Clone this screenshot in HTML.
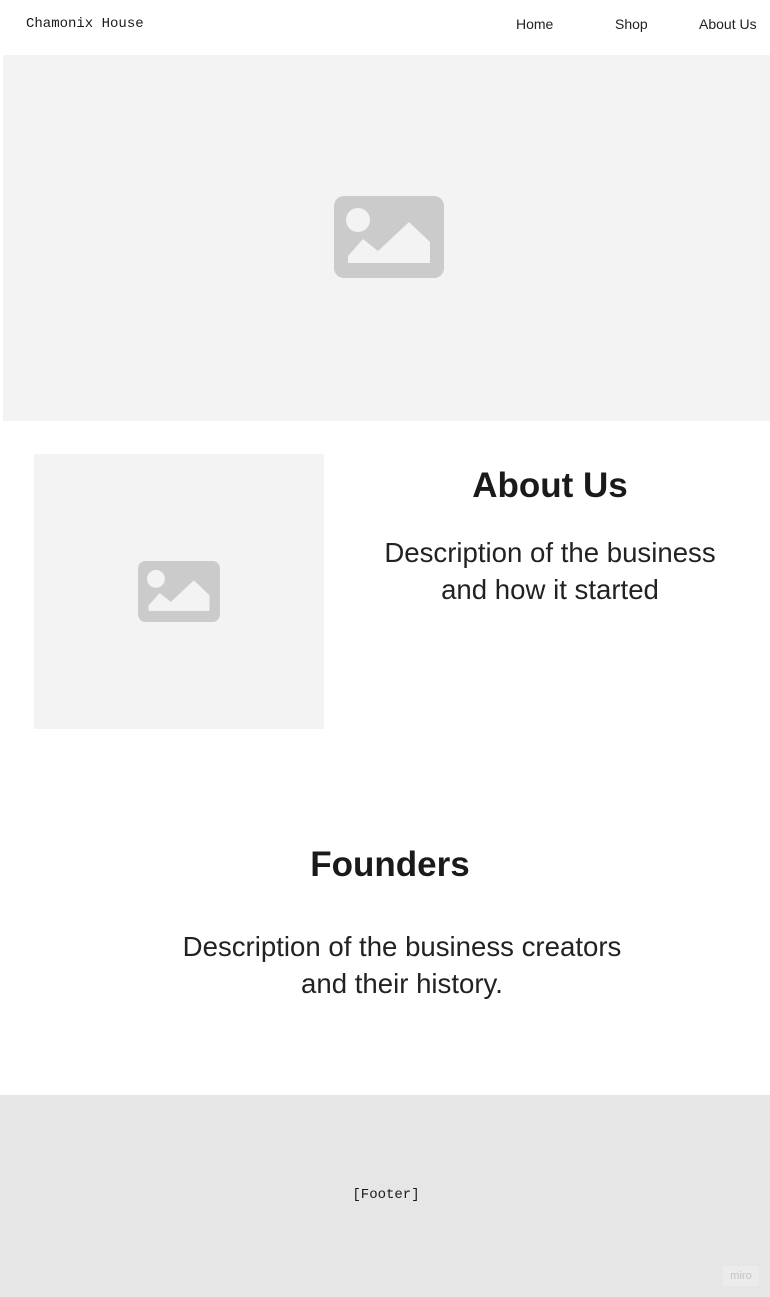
<!DOCTYPE html>
<html><head><style>
*{margin:0;padding:0;box-sizing:border-box}
body{width:770px;height:1297px;background:#fff;position:relative;font-family:"Liberation Sans",sans-serif;color:#1a1a1a;overflow:hidden}
.abs{position:absolute}
.nav{font-size:14px;top:16px;color:#222}
</style></head><body>
<div class="abs" style="left:26px;top:16px;font-family:'Liberation Mono',monospace;font-size:14px">Chamonix House</div>
<div class="abs nav" style="left:516px">Home</div>
<div class="abs nav" style="left:615px">Shop</div>
<div class="abs nav" style="left:699px">About Us</div>
<div class="abs" style="left:3px;top:55px;width:767px;height:366px;background:#f3f3f3"></div>
<svg class="abs" style="left:334px;top:196px" width="110" height="82" viewBox="0 0 110 82"><rect width="110" height="82" rx="10" fill="#cbcbcb"/><circle cx="24" cy="24" r="12" fill="#f3f3f3"/><polygon points="14,67 14,60 29,43 44,55 75,26 96,46 96,67" fill="#f3f3f3"/></svg>
<div class="abs" style="left:34px;top:454px;width:290px;height:275px;background:#f3f3f3"></div>
<svg class="abs" style="left:138px;top:561px" width="82" height="61" viewBox="0 0 110 82"><rect width="110" height="82" rx="10" fill="#cbcbcb"/><circle cx="24" cy="24" r="12" fill="#f3f3f3"/><polygon points="14,67 14,60 29,43 44,55 75,26 96,46 96,67" fill="#f3f3f3"/></svg>
<div class="abs" style="left:350px;width:400px;top:466px;text-align:center;font-size:35px;font-weight:bold">About Us</div>
<div class="abs" style="left:350px;width:400px;top:534px;text-align:center;font-size:27.6px;line-height:37px;color:#222">Description of the business<br>and how it started</div>
<div class="abs" style="left:0;width:780px;top:845px;text-align:center;font-size:35px;font-weight:bold">Founders</div>
<div class="abs" style="left:0;width:804px;top:928px;text-align:center;font-size:27.6px;line-height:37px;color:#222">Description of the business creators<br>and their history.</div>
<div class="abs" style="left:0;top:1095px;width:770px;height:202px;background:#e6e6e6"></div>
<div class="abs" style="left:0;width:772px;top:1187px;text-align:center;font-family:'Liberation Mono',monospace;font-size:14px">[Footer]</div>
<div class="abs" style="left:723px;top:1266px;width:36px;height:20px;background:#ebebeb;color:#c4c4c4;font-size:11px;text-align:center;line-height:20px">miro</div>
</body></html>
